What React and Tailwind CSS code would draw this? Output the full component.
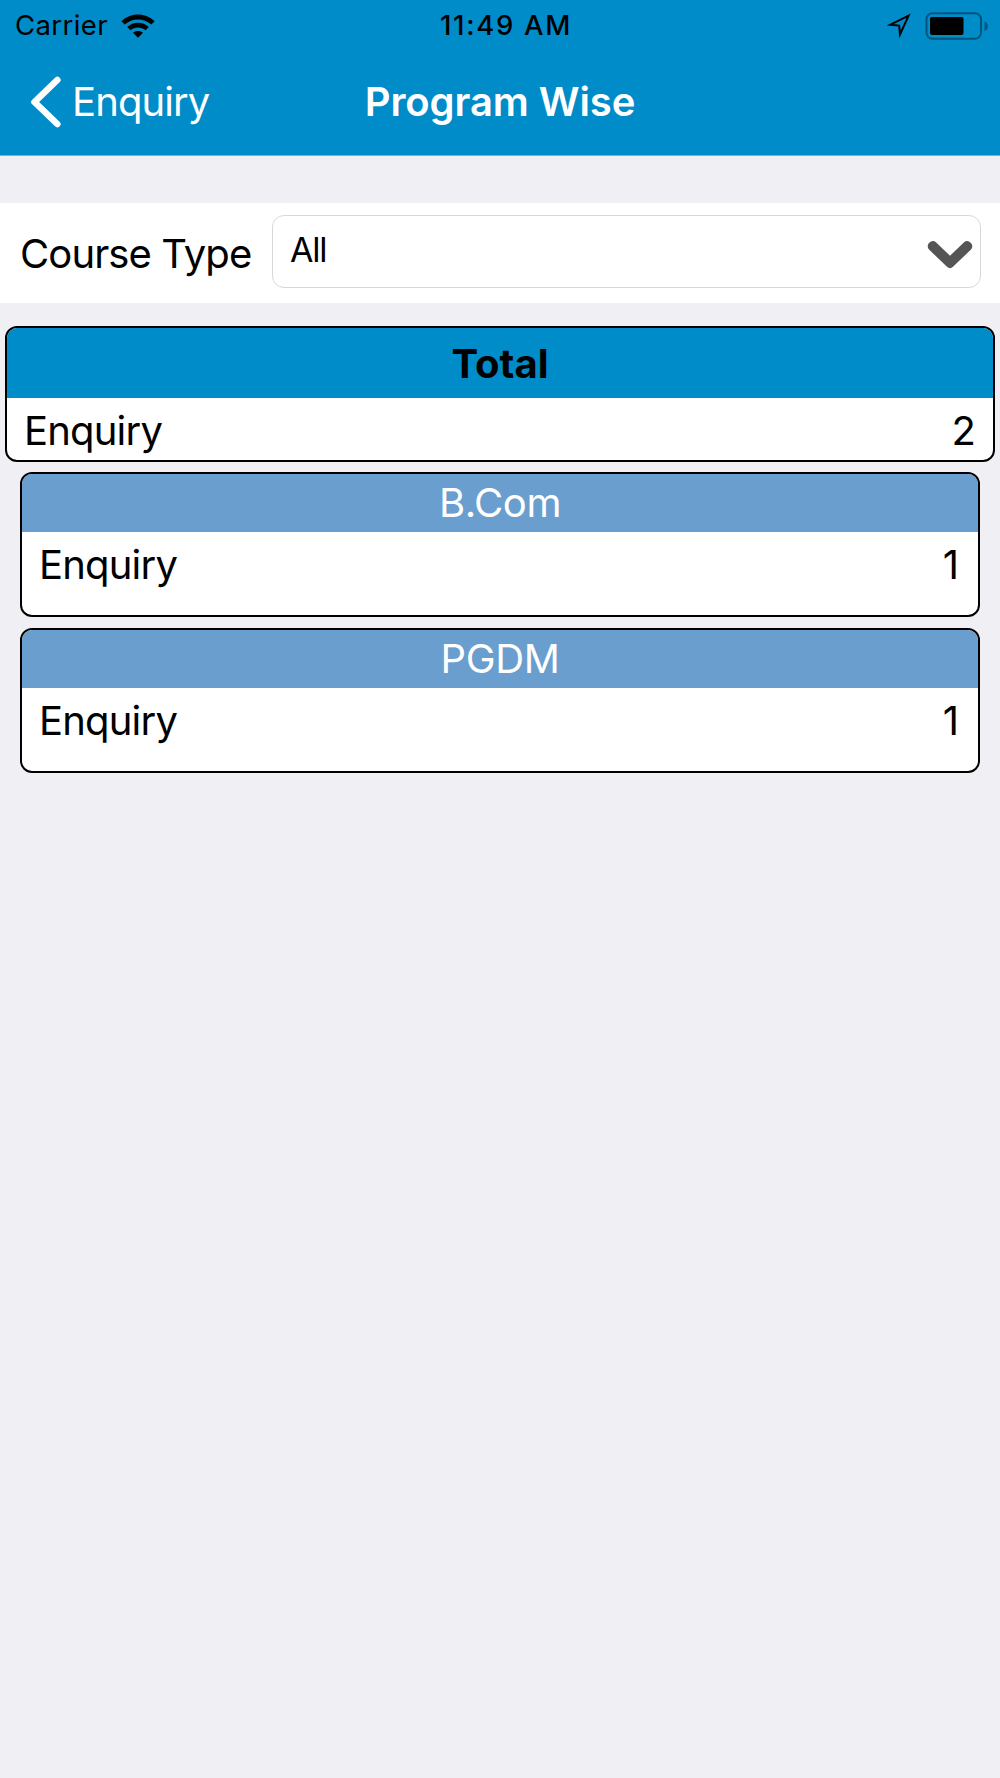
import clsx from 'clsx'

const programs = [
  { name: 'B.Com', enquiry: 1 },
  { name: 'PGDM', enquiry: 1 },
]

function StatusBar() {
  return (
    <div className="flex h-[51px] items-center justify-between pl-[15px] pr-[11px] text-[27.5px] leading-none text-black">
      <div className="flex w-[425px] items-center">
        <span className="tracking-[0.4px]">Carrier</span>
        <svg className="ml-[13px] h-6 w-[34px]" viewBox="0 0 34 24">
          <path d="M.4 7.3C9.6-1.7 24.4-1.7 33.6 7.3L30.3 10.6C23 3.7 11 3.7 3.7 10.6Z" />
          <path d="M6.2 13C12.2 7.3 21.8 7.3 27.8 13L24.5 16.3C20.3 12.5 13.7 12.5 9.5 16.3Z" />
          <path d="M12 18.8C14.7 16.3 19.3 16.3 22 18.8L17 23.8Z" />
        </svg>
      </div>
      <span className="flex-1 whitespace-nowrap font-medium tracking-[1.7px]">11:49 AM</span>
      <svg className="h-[26px] w-[24px]" viewBox="0 0 24 26" fill="none" stroke="black" strokeWidth="2">
        <path d="M3 11.8L21.6 2.6L13 21.5L12.2 12.6Z" />
      </svg>
      <svg className="ml-[14px] h-7 w-[64px]" viewBox="0 0 64 28">
        <rect x="1.5" y="1.2" width="54.5" height="25.6" rx="6" fill="none" stroke="#00567d" strokeWidth="2" />
        <rect x="5" y="5" width="33.5" height="18" rx="2" fill="black" />
        <path d="M59.5 9.5C64 11 64 17.5 59.5 19Z" fill="#00567d" />
      </svg>
    </div>
  )
}

function NavBar() {
  return (
    <div className="grid h-[102px] grid-cols-[1fr_auto_1fr] items-center px-[30px] text-[40px] leading-none text-white">
      <div className="flex items-center">
        <svg className="h-[52px] w-[32px]" viewBox="0 0 32 52" fill="none" stroke="white" strokeWidth="6.6" strokeLinecap="round" strokeLinejoin="round">
          <path d="M27.3 4L4.5 26L27.3 48" />
        </svg>
        <span className="ml-[10px] tracking-[-0.9px]">Enquiry</span>
      </div>
      <h1 className="font-semibold tracking-[-0.1px]">Program Wise</h1>
    </div>
  )
}

function SummaryCard({ title, value, total }) {
  return (
    <section
      className={clsx(
        'overflow-hidden rounded-[12px] border-2 border-black bg-white',
        total ? 'mx-[5px] h-[136px]' : 'mx-5 h-[145px]'
      )}
    >
      <h2
        className={clsx(
          'flex items-center justify-center',
          total ? 'h-[70px] bg-[#008bc9] pt-px font-bold' : 'h-[58px] bg-[#6a9ece] tracking-[-0.4px] text-white'
        )}
      >
        {title}
      </h2>
      <div className={clsx('flex h-[65px] items-center justify-between pl-[17px]', total ? 'pr-[17px]' : 'pr-[19px]')}>
        <span className="tracking-[-0.8px]">Enquiry</span>
        <span>{value}</span>
      </div>
    </section>
  )
}

export default function App() {
  return (
    <div className="min-h-[1778px] bg-[#efeff4] font-['Inter',sans-serif] text-[40px] leading-none text-black">
      <header className="h-[156px] border-b border-[#9fa5ab] bg-[#008bc9]">
        <StatusBar />
        <NavBar />
      </header>

      <div className="mt-[47px] flex h-[100px] items-center bg-white pl-[20px] pr-[19px]">
        <label className="w-[252px] pt-px tracking-[-0.9px]">Course Type</label>
        <button className="mb-[3px] flex h-[73px] flex-1 items-center justify-between rounded-[12px] border border-[#d8d8d8] pl-[17px] pr-[7px]">
          <span className="pb-[3px] text-[34px] tracking-[-1.2px]">All</span>
          <svg className="mt-[5px] h-[29px] w-[46px]" viewBox="0 0 46 29">
            <path
              d="M2 9.5Q-.6 6.2 2 3Q5.7-.6 9.2 2.4L23 15.8L36.8 2.4Q40.3-.6 44 3Q46.6 6.2 44 9.5L26 26.8Q23 29.6 20 26.8Z"
              fill="#555"
            />
          </svg>
        </button>
      </div>

      <main className="mt-[23px] flex flex-col gap-[10px]">
        <SummaryCard title="Total" value={2} total />
        <div className="flex flex-col gap-[11px]">
          {programs.map(p => (
            <SummaryCard key={p.name} title={p.name} value={p.enquiry} />
          ))}
        </div>
      </main>
    </div>
  )
}
